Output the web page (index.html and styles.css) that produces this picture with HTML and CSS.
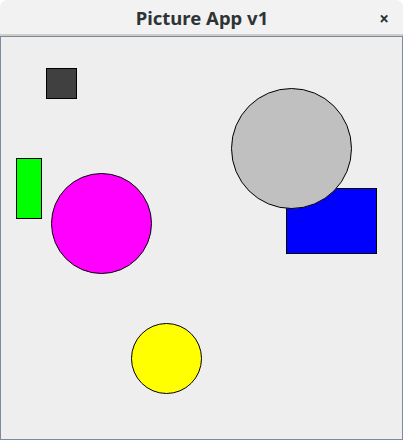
FILE: index.html
```html
<!DOCTYPE html>
<html>
<head>
<meta charset="utf-8">
<link rel="stylesheet" href="styles.css">
</head>
<body>
<div class="window">
  <header class="titlebar">
    <span class="title">Picture App v1</span>
    <span class="close">×</span>
  </header>
  <main class="canvas">
    <svg class="drawing" width="401" height="402" viewBox="0 0 401 402">
      <g transform="translate(-1 -37)">
        <rect x="46.5" y="68.5" width="30" height="30" fill="#404040" stroke="#000"/>
        <rect x="16.5" y="158.5" width="25" height="60" fill="#00ff00" stroke="#000"/>
        <circle cx="101.5" cy="223.5" r="50" fill="#ff00ff" stroke="#000"/>
        <rect x="286.5" y="188.5" width="90" height="65" fill="#0000ff" stroke="#000"/>
        <circle cx="291.5" cy="148.5" r="60" fill="#c0c0c0" stroke="#000"/>
        <circle cx="166.5" cy="358.5" r="35" fill="#ffff00" stroke="#000"/>
      </g>
    </svg>
  </main>
</div>
</body>
</html>
```
FILE: styles.css
```css
html, body {
  margin: 0;
  padding: 0;
  background: #ffffff;
}
.window {
  width: 403px;
  height: 440px;
  display: flex;
  flex-direction: column;
}
.titlebar {
  position: relative;
  height: 34px;
  flex: 0 0 34px;
  background: #f2f2f2;
  border-radius: 7px 7px 0 0;
  border-bottom: 2px solid #cfcdca;
  display: flex;
  align-items: center;
  justify-content: center;
  font-family: "Noto Sans", "DejaVu Sans", sans-serif;
  color: #2e3436;
}
.title {
  font-weight: bold;
  font-size: 18.5px;
  margin-top: 0;
  margin-left: 1px;
}
.close {
  position: absolute;
  right: 14px;
  top: 7px;
  font-size: 17px;
  font-weight: bold;
  color: #2e3436;
}
.canvas {
  flex: 1;
  background: #eeeeee;
  border: 1px solid #7b8a9e;
  display: block;
  overflow: hidden;
}
.drawing {
  display: block;
}
```
